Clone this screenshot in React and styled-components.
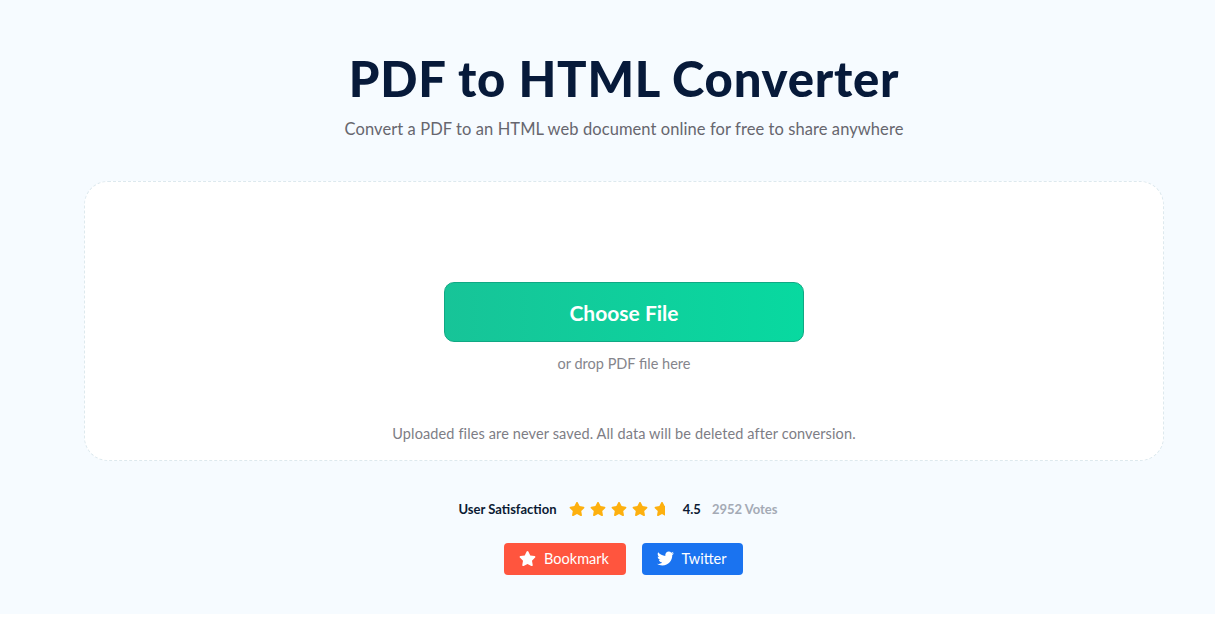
import React from 'react';
import styled, { createGlobalStyle } from 'styled-components';
import { FaStar, FaTwitter } from 'react-icons/fa';

const GlobalStyle = createGlobalStyle`
  html, body {
    margin: 0;
    padding: 0;
    background: #fff;
    font-family: 'Lato', 'Open Sans', sans-serif;
  }
`;

const Hero = styled.section`
  height: 614px;
  box-sizing: border-box;
  background: #f6fbff;
  padding: 46px 51px 0 84px;
  display: flex;
  flex-direction: column;
  align-items: center;
`;

const Title = styled.h1`
  margin: 0;
  font-size: 49px;
  line-height: 64px;
  font-weight: 900;
  color: #071a3a;
  letter-spacing: 0.75px;
`;

const Subtitle = styled.p`
  margin: 7px 0 0;
  font-size: 16.5px;
  line-height: 24px;
  letter-spacing: 0.08px;
  color: #66666e;
`;

const DropZone = styled.div`
  margin-top: 40px;
  width: 100%;
  height: 280px;
  box-sizing: border-box;
  background: #fff;
  border: 1px dashed #dde9ee;
  border-radius: 24px;
  padding-top: 100px;
  display: flex;
  flex-direction: column;
  align-items: center;
`;

const ChooseButton = styled.button`
  width: 360px;
  height: 60px;
  border: 1px solid #10a884;
  border-radius: 10px;
  background: linear-gradient(90deg, #17c498, #08d9a0);
  color: #fff;
  font-family: inherit;
  font-size: 21px;
  font-weight: 700;
`;

const DropHint = styled.div`
  margin-top: 12px;
  font-size: 14.5px;
  line-height: 20px;
  color: #85858c;
`;

const Notice = styled.div`
  margin-top: auto;
  margin-bottom: 16px;
  font-size: 14.5px;
  line-height: 20px;
  letter-spacing: 0.12px;
  color: #7d7d85;
`;

const RatingRow = styled.div`
  margin-top: 39px;
  margin-right: 12px;
  height: 18px;
  display: flex;
  align-items: center;
  font-size: 13px;
  font-weight: 700;
  color: #0b1a33;
`;

const Stars = styled.div`
  display: flex;
  gap: 5.3px;
  margin: 0 14px 0 12px;
  color: #fdb00f;
  font-size: 16px;
`;

const HalfStar = styled.span`
  width: 11px;
  height: 16px;
  margin-right: 4px;
  display: inline-block;
  overflow: hidden;
`;

const Votes = styled.span`
  margin-left: 11px;
  color: #a4aab5;
`;

const Actions = styled.div`
  margin-top: 25px;
  margin-right: 1px;
  display: flex;
  gap: 16px;
`;

const ActionButton = styled.a`
  height: 32px;
  box-sizing: border-box;
  width: ${(p) => p.$width}px;
  padding: 0 2px 1px 0;
  border-radius: 4px;
  background: ${(p) => p.$bg};
  color: #fff;
  font-size: 14.5px;
  display: flex;
  align-items: center;
  justify-content: center;
  gap: 8px;
  svg {
    font-size: 17px;
  }
`;

export default function App() {
  return (
    <>
      <GlobalStyle />
      <Hero>
        <Title>PDF to HTML Converter</Title>
        <Subtitle>Convert a PDF to an HTML web document online for free to share anywhere</Subtitle>
        <DropZone>
          <ChooseButton>Choose File</ChooseButton>
          <DropHint>or drop PDF file here</DropHint>
          <Notice>Uploaded files are never saved. All data will be deleted after conversion.</Notice>
        </DropZone>
        <RatingRow>
          User Satisfaction
          <Stars>
            <FaStar />
            <FaStar />
            <FaStar />
            <FaStar />
            <HalfStar>
              <FaStar />
            </HalfStar>
          </Stars>
          4.5
          <Votes>2952 Votes</Votes>
        </RatingRow>
        <Actions>
          <ActionButton $bg="#ff553e" $width={122}>
            <FaStar />
            Bookmark
          </ActionButton>
          <ActionButton $bg="#1a73f0" $width={101}>
            <FaTwitter />
            Twitter
          </ActionButton>
        </Actions>
      </Hero>
    </>
  );
}
